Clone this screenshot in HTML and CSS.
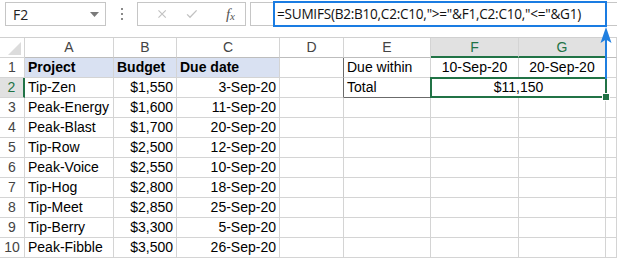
FILE: index.html
```html
<!DOCTYPE html>
<html lang="en">
<head>
  <meta charset="UTF-8" />
  <title>SUMIFS between dates</title>
  <link rel="stylesheet" href="styles.css">
</head>
<body>
  <div class="toolbar">
    <div class="name-box">
      <span>F2</span>
      <svg class="caret" width="9" height="5" viewBox="0 0 9 5"><path d="M0 0h9L4.5 5z" fill="#7a7a7a"/></svg>
    </div>
    <div class="grip"><i></i><i></i><i></i></div>
    <div class="fx-buttons">
      <svg width="14" height="14" viewBox="0 0 14 14"><path d="M2 2l10 10M12 2L2 12" stroke="#c2c2c2" stroke-width="1.6" fill="none"/></svg>
      <svg width="16" height="14" viewBox="0 0 16 14"><path d="M1.5 7.5l4 4L14.5 2" stroke="#c2c2c2" stroke-width="1.8" fill="none"/></svg>
      <span class="fx">f<sub>x</sub></span>
    </div>
    <div class="formula-box">
      <div class="formula">=SUMIFS(B2:B10,C2:C10,"&gt;="&amp;F1,C2:C10,"&lt;="&amp;G1)</div>
    </div>
  </div>

  <div class="sheet">
    <div class="hd corner"></div>
    <div class="hd col">A</div>
    <div class="hd col">B</div>
    <div class="hd col">C</div>
    <div class="hd col">D</div>
    <div class="hd col">E</div>
    <div class="hd col sel">F</div>
    <div class="hd col sel">G</div>
    <div class="hd col"></div>

    <div class="hd row">1</div>
    <div class="cell head">Project</div>
    <div class="cell head">Budget</div>
    <div class="cell head">Due date</div>
    <div class="cell edge-r"></div>
    <div class="cell">Due within</div>
    <div class="cell num center">10-Sep-20</div>
    <div class="cell num center">20-Sep-20</div>
    <div class="cell"></div>

    <div class="hd row sel-row">2</div>
    <div class="cell">Tip-Zen</div>
    <div class="cell num">$1,550</div>
    <div class="cell num">3-Sep-20</div>
    <div class="cell edge-r"></div>
    <div class="cell edge-b">Total</div>
    <div class="cell center active">$11,150</div>
    <div class="cell"></div>

    <div class="hd row">3</div>
    <div class="cell">Peak-Energy</div>
    <div class="cell num">$1,600</div>
    <div class="cell num">11-Sep-20</div>
    <div class="cell"></div><div class="cell"></div><div class="cell"></div><div class="cell"></div><div class="cell"></div>

    <div class="hd row">4</div>
    <div class="cell">Peak-Blast</div>
    <div class="cell num">$1,700</div>
    <div class="cell num">20-Sep-20</div>
    <div class="cell"></div><div class="cell"></div><div class="cell"></div><div class="cell"></div><div class="cell"></div>

    <div class="hd row">5</div>
    <div class="cell">Tip-Row</div>
    <div class="cell num">$2,500</div>
    <div class="cell num">12-Sep-20</div>
    <div class="cell"></div><div class="cell"></div><div class="cell"></div><div class="cell"></div><div class="cell"></div>

    <div class="hd row">6</div>
    <div class="cell">Peak-Voice</div>
    <div class="cell num">$2,550</div>
    <div class="cell num">10-Sep-20</div>
    <div class="cell"></div><div class="cell"></div><div class="cell"></div><div class="cell"></div><div class="cell"></div>

    <div class="hd row">7</div>
    <div class="cell">Tip-Hog</div>
    <div class="cell num">$2,800</div>
    <div class="cell num">18-Sep-20</div>
    <div class="cell"></div><div class="cell"></div><div class="cell"></div><div class="cell"></div><div class="cell"></div>

    <div class="hd row">8</div>
    <div class="cell">Tip-Meet</div>
    <div class="cell num">$2,850</div>
    <div class="cell num">25-Sep-20</div>
    <div class="cell"></div><div class="cell"></div><div class="cell"></div><div class="cell"></div><div class="cell"></div>

    <div class="hd row">9</div>
    <div class="cell">Tip-Berry</div>
    <div class="cell num">$3,300</div>
    <div class="cell num">5-Sep-20</div>
    <div class="cell"></div><div class="cell"></div><div class="cell"></div><div class="cell"></div><div class="cell"></div>

    <div class="hd row">10</div>
    <div class="cell">Peak-Fibble</div>
    <div class="cell num">$3,500</div>
    <div class="cell num">26-Sep-20</div>
    <div class="cell"></div><div class="cell"></div><div class="cell"></div><div class="cell"></div><div class="cell"></div>
  </div>

  <!-- callout arrow from the formula to the result cell -->
  <svg class="arrow" width="14" height="52" viewBox="0 0 14 52">
    <path d="M7 8V52" stroke="#1f7fe0" stroke-width="2"/>
    <path d="M7 0L1.5 16L7 12.5L12.5 16z" fill="#1f7fe0"/>
  </svg>
</body>
</html>
```

FILE: styles.css
```css
body {
  margin: 0;
  background: #fff;
  font-family: "Liberation Sans", Arial, sans-serif;
  color: #000;
  position: relative;
  width: 617px;
  height: 258px;
  overflow: hidden;
}

.toolbar {
  height: 37px;
  display: flex;
  align-items: flex-start;
  padding-top: 2px;
  box-sizing: border-box;
}

.name-box {
  margin-left: 5px;
  width: 101px;
  height: 24px;
  box-sizing: border-box;
  border: 1px solid #c6c6c6;
  display: flex;
  align-items: center;
  justify-content: space-between;
  padding: 0 6px 0 7px;
  font-family: "Open Sans", sans-serif;
  font-size: 14px;
  color: #222;
}

.grip {
  width: 31px;
  height: 24px;
  display: flex;
  flex-direction: column;
  align-items: center;
  justify-content: center;
  gap: 3px;
}

.grip i {
  width: 2px;
  height: 2px;
  background: #8a8a8a;
}

.fx-buttons {
  width: 109px;
  height: 24px;
  box-sizing: border-box;
  border: 1px solid #c6c6c6;
  display: flex;
  align-items: center;
  padding: 0 10px 0 19px;
  gap: 19px;
}

.fx {
  margin-left: 9px;
  font-family: "Liberation Serif", serif;
  font-style: italic;
  font-size: 15px;
  color: #555;
}

.fx sub {
  font-size: 11px;
  vertical-align: -1px;
}

.formula-box {
  margin-left: 4px;
  flex: 1;
  height: 24px;
  box-sizing: border-box;
  border: 1px solid #c6c6c6;
  border-right: none;
  position: relative;
}

.formula {
  position: absolute;
  left: 22px;
  top: -2px;
  width: 334px;
  height: 26px;
  box-sizing: border-box;
  border: 2px solid #1a7ce2;
  padding-left: 2px;
  font-family: "Open Sans", sans-serif;
  font-size: 13.6px;
  line-height: 22px;
  letter-spacing: -0.25px;
  color: #111;
  white-space: nowrap;
}

.sheet {
  display: grid;
  grid-template-columns: 25px 89px 63px 103px 64px 87px 88px 87px 11px;
  grid-auto-rows: 20px;
  border-top: 1px solid #d0d0d0;
}

.sheet > div {
  box-sizing: border-box;
  border-right: 1px solid #d4d4d4;
  border-bottom: 1px solid #d4d4d4;
  font-size: 14px;
  line-height: 19px;
  padding: 0 3px;
  white-space: nowrap;
  overflow: hidden;
}

.hd {
  color: #444;
  text-align: center;
  background: #fff;
}

.hd.col {
  border-bottom-color: #bdbdbd;
}

.hd.sel {
  background: #e1e1e1;
  color: #217346;
  border-bottom: 2px solid #217346;
}

.hd.row {
  padding: 0;
}

.hd.sel-row {
  background: #e1e1e1;
  color: #217346;
  border-right: 2px solid #217346;
}

.corner {
  position: relative;
}

.corner::after {
  content: "";
  position: absolute;
  right: 3px;
  bottom: 2px;
  border-left: 13px solid transparent;
  border-bottom: 13px solid #dcdcdc;
}

.head {
  background: #d9e1f2;
  font-weight: bold;
}

.num {
  text-align: right;
}

.center {
  text-align: center;
}

.sheet > .edge-r {
  border-right-color: #6b6b6b;
}

.sheet > .edge-b {
  border-bottom-color: #6b6b6b;
}

.sheet > .active {
  grid-column: span 2;
  position: relative;
  overflow: visible;
  border-right: none;
}

.active::after {
  content: "";
  position: absolute;
  left: -1px;
  top: -1px;
  right: -1px;
  bottom: -1px;
  border: 2px solid #217346;
}

.active::before {
  content: "";
  position: absolute;
  right: -4px;
  bottom: -4px;
  width: 6px;
  height: 6px;
  background: #217346;
  border: 1px solid #fff;
  z-index: 2;
}

.arrow {
  position: absolute;
  left: 599px;
  top: 27px;
}
```
